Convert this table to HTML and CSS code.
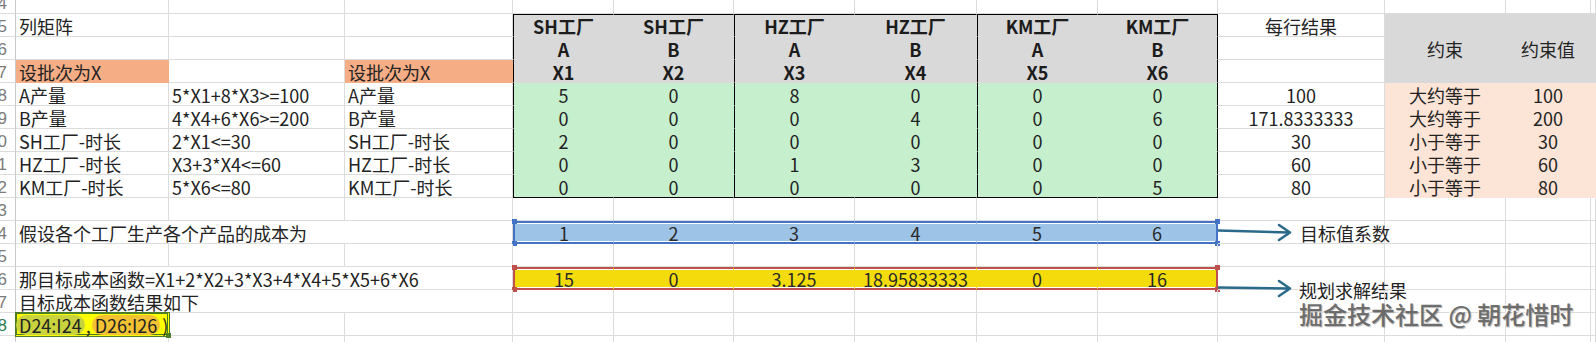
FILE: index.html
```html
<!DOCTYPE html>
<html lang="zh">
<head>
<meta charset="utf-8">
<title>规划求解</title>
<link rel="stylesheet" href="styles.css">
</head>
<body>
<div class="sheet">
  <div class="row">
    <div class="c rh">4</div><div class="c ca"></div><div class="c cb"></div><div class="c cc"></div><div class="c cd"></div><div class="c ce"></div><div class="c cf"></div><div class="c cg"></div><div class="c chh"></div><div class="c ci"></div><div class="c cj"></div><div class="c ck"></div><div class="c cl"></div><div class="c cm"></div>
  </div>
  <div class="row">
    <div class="c rh">5</div><div class="c ca">列矩阵</div><div class="c cb"></div><div class="c cc"></div>
    <div class="c cd hdr tl tt">SH工厂</div><div class="c ce hdr tt">SH工厂</div><div class="c cf hdr tl tt">HZ工厂</div><div class="c cg hdr tt">HZ工厂</div><div class="c chh hdr tl tt">KM工厂</div><div class="c ci hdr tr tt">KM工厂</div>
    <div class="c cj n">每行结果</div><div class="c ck n gry"></div><div class="c cl n gry"></div><div class="c cm gry"></div>
  </div>
  <div class="row">
    <div class="c rh">6</div><div class="c ca"></div><div class="c cb"></div><div class="c cc"></div>
    <div class="c cd hdr tl">A</div><div class="c ce hdr">B</div><div class="c cf hdr tl">A</div><div class="c cg hdr">B</div><div class="c chh hdr tl">A</div><div class="c ci hdr tr">B</div>
    <div class="c cj n"></div><div class="c ck n gry">约束</div><div class="c cl n gry">约束值</div><div class="c cm gry"></div>
  </div>
  <div class="row">
    <div class="c rh">7</div><div class="c ca org">设批次为X</div><div class="c cb"></div><div class="c cc org">设批次为X</div>
    <div class="c cd hdr tl">X1</div><div class="c ce hdr">X2</div><div class="c cf hdr tl">X3</div><div class="c cg hdr">X4</div><div class="c chh hdr tl">X5</div><div class="c ci hdr tr">X6</div>
    <div class="c cj n"></div><div class="c ck n gry"></div><div class="c cl n gry"></div><div class="c cm gry"></div>
  </div>
  <div class="row">
    <div class="c rh">8</div><div class="c ca">A产量</div><div class="c cb">5*X1+8*X3&gt;=100</div><div class="c cc">A产量</div>
    <div class="c cd n grn tl">5</div><div class="c ce n grn">0</div><div class="c cf n grn tl">8</div><div class="c cg n grn">0</div><div class="c chh n grn tl">0</div><div class="c ci n grn tr">0</div>
    <div class="c cj n">100</div><div class="c ck n pch">大约等于</div><div class="c cl n pch">100</div><div class="c cm pch"></div>
  </div>
  <div class="row">
    <div class="c rh">9</div><div class="c ca">B产量</div><div class="c cb">4*X4+6*X6&gt;=200</div><div class="c cc">B产量</div>
    <div class="c cd n grn tl">0</div><div class="c ce n grn">0</div><div class="c cf n grn tl">0</div><div class="c cg n grn">4</div><div class="c chh n grn tl">0</div><div class="c ci n grn tr">6</div>
    <div class="c cj n">171.8333333</div><div class="c ck n pch">大约等于</div><div class="c cl n pch">200</div><div class="c cm pch"></div>
  </div>
  <div class="row">
    <div class="c rh">10</div><div class="c ca">SH工厂-时长</div><div class="c cb">2*X1&lt;=30</div><div class="c cc">SH工厂-时长</div>
    <div class="c cd n grn tl">2</div><div class="c ce n grn">0</div><div class="c cf n grn tl">0</div><div class="c cg n grn">0</div><div class="c chh n grn tl">0</div><div class="c ci n grn tr">0</div>
    <div class="c cj n">30</div><div class="c ck n pch">小于等于</div><div class="c cl n pch">30</div><div class="c cm pch"></div>
  </div>
  <div class="row">
    <div class="c rh">11</div><div class="c ca">HZ工厂-时长</div><div class="c cb">X3+3*X4&lt;=60</div><div class="c cc">HZ工厂-时长</div>
    <div class="c cd n grn tl">0</div><div class="c ce n grn">0</div><div class="c cf n grn tl">1</div><div class="c cg n grn">3</div><div class="c chh n grn tl">0</div><div class="c ci n grn tr">0</div>
    <div class="c cj n">60</div><div class="c ck n pch">小于等于</div><div class="c cl n pch">60</div><div class="c cm pch"></div>
  </div>
  <div class="row">
    <div class="c rh">12</div><div class="c ca">KM工厂-时长</div><div class="c cb">5*X6&lt;=80</div><div class="c cc">KM工厂-时长</div>
    <div class="c cd n grn tl tb">0</div><div class="c ce n grn tb">0</div><div class="c cf n grn tl tb">0</div><div class="c cg n grn tb">0</div><div class="c chh n grn tl tb">0</div><div class="c ci n grn tr tb">5</div>
    <div class="c cj n">80</div><div class="c ck n pch">小于等于</div><div class="c cl n pch">80</div><div class="c cm pch"></div>
  </div>
  <div class="row">
    <div class="c rh">13</div><div class="c ca"></div><div class="c cb"></div><div class="c cc"></div><div class="c cd"></div><div class="c ce"></div><div class="c cf"></div><div class="c cg"></div><div class="c chh"></div><div class="c ci"></div><div class="c cj"></div><div class="c ck"></div><div class="c cl"></div><div class="c cm"></div>
  </div>
  <div class="row">
    <div class="c rh">14</div><div class="c span3">假设各个工厂生产各个产品的成本为</div>
    <div class="c cd n blu first">1</div><div class="c ce n blu">2</div><div class="c cf n blu">3</div><div class="c cg n blu">4</div><div class="c chh n blu">5</div><div class="c ci n blu last">6</div>
    <div class="c cj ann"><svg class="arr" width="76" height="20" viewBox="0 0 76 20"><path d="M0 8.5 L71 10.5 M61 3 L72 10.5 L61 18" fill="none" stroke="#2b6a8b" stroke-width="2.5" stroke-linecap="round" stroke-linejoin="round"/></svg><span class="note">目标值系数</span></div>
    <div class="c ck"></div><div class="c cl"></div><div class="c cm"></div>
  </div>
  <div class="row">
    <div class="c rh">15</div><div class="c ca"></div><div class="c cb"></div><div class="c cc"></div><div class="c cd"></div><div class="c ce"></div><div class="c cf"></div><div class="c cg"></div><div class="c chh"></div><div class="c ci"></div><div class="c cj"></div><div class="c ck"></div><div class="c cl"></div><div class="c cm"></div>
  </div>
  <div class="row">
    <div class="c rh">16</div><div class="c span3">那目标成本函数=X1+2*X2+3*X3+4*X4+5*X5+6*X6</div>
    <div class="c cd n yel first">15</div><div class="c ce n yel">0</div><div class="c cf n yel">3.125</div><div class="c cg n yel">18.95833333</div><div class="c chh n yel">0</div><div class="c ci n yel last">16</div>
    <div class="c cj ann ann2"><svg class="arr" width="76" height="20" viewBox="0 0 76 20"><path d="M0 9.5 L71 10.5 M61 3 L72 10.5 L61 18" fill="none" stroke="#2b6a8b" stroke-width="2.5" stroke-linecap="round" stroke-linejoin="round"/></svg><span class="note">规划求解结果</span></div>
    <div class="c ck"></div><div class="c cl"></div><div class="c cm"></div>
  </div>
  <div class="row">
    <div class="c rh">17</div><div class="c span3">目标成本函数结果如下</div><div class="c cd"></div><div class="c ce"></div><div class="c cf"></div><div class="c cg"></div><div class="c chh"></div><div class="c ci"></div><div class="c cj"></div><div class="c ck"></div><div class="c cl"></div><div class="c cm"></div>
  </div>
  <div class="row">
    <div class="c rh cur">18</div><div class="c ca sel"><span class="pill p1">D24:I24</span><span class="comma">,</span><span class="pill p2">D26:I26</span><span class="paren">)</span></div><div class="c cb"></div><div class="c cc"></div><div class="c cd"></div><div class="c ce"></div><div class="c cf"></div><div class="c cg"></div><div class="c chh"></div><div class="c ci"></div><div class="c cj"></div><div class="c ck"></div><div class="c cl"></div><div class="c cm"></div>
  </div>
  <div class="row">
    <div class="c rh">19</div><div class="c ca"></div><div class="c cb"></div><div class="c cc"></div><div class="c cd"></div><div class="c ce"></div><div class="c cf"></div><div class="c cg"></div><div class="c chh"></div><div class="c ci"></div><div class="c cj"></div><div class="c ck"></div><div class="c cl"></div><div class="c cm"></div>
  </div>
</div>
<div class="wm">掘金技术社区 @ 朝花惜时</div>
</body>
</html>
```
FILE: styles.css
```css
* { box-sizing: border-box; }
html, body { margin: 0; padding: 0; background: #fff; overflow: hidden; }
body {
  position: relative;
  width: 1596px;
  height: 342px;
  font-family: "Noto Sans CJK SC", "Liberation Sans", sans-serif;
  font-size: 18px;
  color: #232323;
}
.sheet { margin-top: -9px; width: 1596px; }
.row { display: flex; height: 23px; }
.c {
  flex: none;
  position: relative;
  height: 23px;
  display: flex;
  align-items: center;
  padding: 2px 0 0 3px;
  line-height: 21px;
  white-space: nowrap;
  border-right: 1px solid #dcdcdc;
  border-bottom: 1px solid #dcdcdc;
}
.n { justify-content: center; padding-left: 0; }

.rh {
  width: 16px;
  justify-content: flex-end;
  overflow: hidden;
  padding: 2px 8px 0 0;
  font-family: "Liberation Sans", sans-serif;
  font-size: 17px;
  color: #7b7b7b;
  border-right-color: #c8c8c8;
}
.rh.cur { color: #2e7d4f; }

.ca { width: 153px; }
.cb { width: 176px; }
.cc { width: 168px; }
.cd { width: 101px; }
.ce { width: 120px; }
.cf { width: 121px; }
.cg { width: 122px; }
.chh { width: 121px; }
.ci { width: 120px; }
.cj { width: 167px; }
.ck { width: 121px; }
.cl { width: 85px; }
.cm { width: 5px; padding: 0; }
.span3 { width: 497px; }

/* fills */
.org { background: #f4ad85; border-color: transparent; }
.hdr { background: #d9d9d9; border-color: transparent; font-weight: bold; justify-content: center; padding-left: 0; color: #1c1c1c; }
.gry { background: #d9d9d9; border-color: transparent; }
.grn { background: #c6efce; border-color: transparent; }
.pch { background: #fce4d6; border-color: transparent; }

/* table frame */
.tt { border-top: 1px solid #000; }
.tl { border-left: 1px solid #000; }
.tr { border-right: 1px solid #000; }
.tb { border-bottom: 1px solid #000; }

/* selected ranges */
.blu, .yel {
  border-color: transparent;
  border-top: 2px solid var(--sel);
  border-bottom: 2px solid var(--sel);
  box-shadow: inset 0 1px 0 #fff, inset 0 -1px 0 #fff;
  padding-top: 1px;
  color: #2a2a2a;
}
.blu { --sel: #4472c4; background: #9dc3e6; }
.yel { --sel: #c0504d; background: #f4dc0c; }
.first { border-left: 2px solid var(--sel); }
.last { border-right: 2px solid var(--sel); }
.first::before, .first::after, .last::before, .last::after {
  content: "";
  position: absolute;
  width: 5px;
  height: 5px;
  background: var(--sel);
}
.first::before { left: -3px; top: -4px; }
.first::after { left: -3px; bottom: -4px; }
.last::before { right: -4px; top: -4px; }
.last::after { right: -4px; bottom: -4px; }

/* annotations */
.ann { padding: 0; align-items: center; }
.ann2 { align-items: flex-start; }
.arr { flex: none; display: block; }
.note { margin-left: 6px; padding-top: 3px; }
.ann2 .arr { margin-top: 11px; }
.ann2 .note { margin-top: 13px; margin-left: 5px; padding-top: 0; }

/* active cell in edit mode */
.sel {
  background: #ffff00;
  border-color: transparent;
  box-shadow: 0 0 0 1px #4a7d26, inset 0 0 0 1px #4a7d26;
  padding: 2px 0 0 0;
  z-index: 1;
}
.sel::after {
  content: "";
  position: absolute;
  right: -3px;
  bottom: -3px;
  width: 5px;
  height: 5px;
  background: #4a7d26;
}
.pill { border-radius: 10px; padding: 0 3px; line-height: 20px; }
.p1 { background: #c9d33e; }
.p2 { background: #f2c232; }
.comma { padding: 0 1px; }
.paren { padding-left: 2px; }

/* watermark */
.wm {
  position: absolute;
  left: 1299px;
  top: 302px;
  font-size: 24px;
  line-height: 24px;
  font-weight: 500;
  white-space: nowrap;
  color: rgba(100, 100, 100, 0.92);
  text-shadow: 1px 1px 1px rgba(0, 0, 0, 0.3), -1px -1px 0 rgba(255, 255, 255, 0.9);
}
```
